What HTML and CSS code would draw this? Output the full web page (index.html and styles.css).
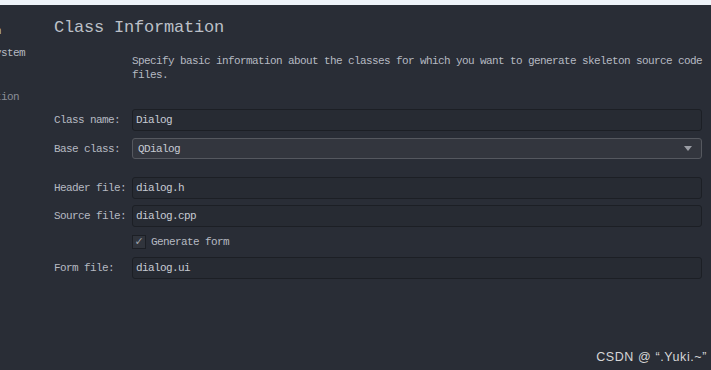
FILE: index.html
```html
<!DOCTYPE html>
<html lang="en">
<head>
    <meta charset="UTF-8">
    <meta name="viewport" content="width=device-width, initial-scale=1.0">
    <title>Class Information</title>
    <link rel="stylesheet" href="styles.css">
</head>
<body>
    <div class="top-strip"></div>
    <div class="page">
        <!-- Các bước của wizard (bị cắt bên trái) -->
        <div class="sidebar">
            <ul class="steps">
                <li class="done">Location</li>
                <li class="done">Build System</li>
                <li class="current">Details</li>
                <li class="todo">Translation</li>
                <li class="todo">Kits</li>
                <li class="todo">Summary</li>
            </ul>
        </div>

        <main class="content">
            <h1 class="title">Class Information</h1>
            <p class="desc">Specify basic information about the classes for which you want to generate skeleton source code files.</p>

            <div class="form">
                <div class="row">
                    <label class="label">Class name:</label>
                    <div class="field">Dialog</div>
                </div>
                <div class="row row-combo">
                    <label class="label">Base class:</label>
                    <div class="field combo">
                        <span>QDialog</span>
                        <span class="arrow"></span>
                    </div>
                </div>
                <div class="row row-header">
                    <label class="label">Header file:</label>
                    <div class="field">dialog.h</div>
                </div>
                <div class="row row-source">
                    <label class="label">Source file:</label>
                    <div class="field">dialog.cpp</div>
                </div>
                <div class="row row-check">
                    <span class="label"></span>
                    <span class="checkbox">&#10003;</span>
                    <span class="check-text">Generate form</span>
                </div>
                <div class="row row-form">
                    <label class="label">Form file:</label>
                    <div class="field">dialog.ui</div>
                </div>
            </div>
        </main>
    </div>

    <div class="watermark">CSDN @ &ldquo;.Yuki.~&rdquo;</div>
</body>
</html>
```

FILE: styles.css
```css
/* Kiểu chung */
body {
    margin: 0;
    padding: 0;
    background-color: #292d36;
    color: #b6bac2;
    font-family: 'Liberation Mono', 'DejaVu Sans Mono', monospace;
    font-size: 11px;
    letter-spacing: -0.6px;
    height: 370px;
    overflow: hidden;
}

.top-strip {
    height: 5px;
    background-color: #eef3f9;
}

.page {
    display: flex;
}

/* Sidebar các bước */
.sidebar {
    width: 54px;
    flex-shrink: 0;
    overflow: hidden;
}

.steps {
    list-style: none;
    margin: 0 0 0 -47px;
    padding: 15px 0 0 0;
    white-space: nowrap;
}

.steps li {
    height: 22px;
    line-height: 22px;
}

.steps .done {
    color: #b6bac2;
}

.steps .todo {
    color: #8a8e96;
}

/* Nội dung chính */
.content {
    flex: 1;
}

.title {
    margin: 12px 0 0 0;
    font-size: 17px;
    font-weight: normal;
    letter-spacing: -0.2px;
    line-height: 22px;
    color: #bcc0c8;
}

.desc {
    margin: 15px 0 0 78px;
    width: 574px;
    line-height: 14px;
    color: #b6bac2;
}

.form {
    margin-top: 27px;
    width: 648px;
}

.row {
    display: flex;
    align-items: center;
}

.label {
    width: 78px;
    flex-shrink: 0;
}

.field {
    flex: 1;
    height: 20px;
    line-height: 20px;
    padding: 0 3px;
    background-color: #272b33;
    border: 1px solid #1c1f25;
    border-radius: 3px;
    color: #c6cad2;
}

.row-combo {
    margin-top: 7px;
}

.combo {
    display: flex;
    justify-content: space-between;
    align-items: center;
    height: 19px;
    padding: 0 5px;
    background-color: #33363e;
    border-color: #55585f;
}

.arrow {
    width: 0;
    height: 0;
    margin-right: 4px;
    border-left: 4px solid transparent;
    border-right: 4px solid transparent;
    border-top: 5px solid #9a9da4;
}

.row-header {
    margin-top: 18px;
}

.row-source {
    margin-top: 6px;
}

.row-check {
    margin-top: 8px;
    height: 14px;
}

.checkbox {
    width: 12px;
    height: 12px;
    line-height: 12px;
    text-align: center;
    background-color: #30343c;
    border: 1px solid #1c1f25;
    color: #9da0a7;
    font-family: 'DejaVu Sans', sans-serif;
    font-size: 11px;
    letter-spacing: 0;
}

.check-text {
    margin-left: 5px;
}

.row-form {
    margin-top: 8px;
}

/* Watermark */
.watermark {
    position: absolute;
    right: 4px;
    bottom: 6px;
    font-family: 'Liberation Sans', Arial, sans-serif;
    font-size: 12.5px;
    letter-spacing: 0.6px;
    color: #d6d6d6;
}
```
